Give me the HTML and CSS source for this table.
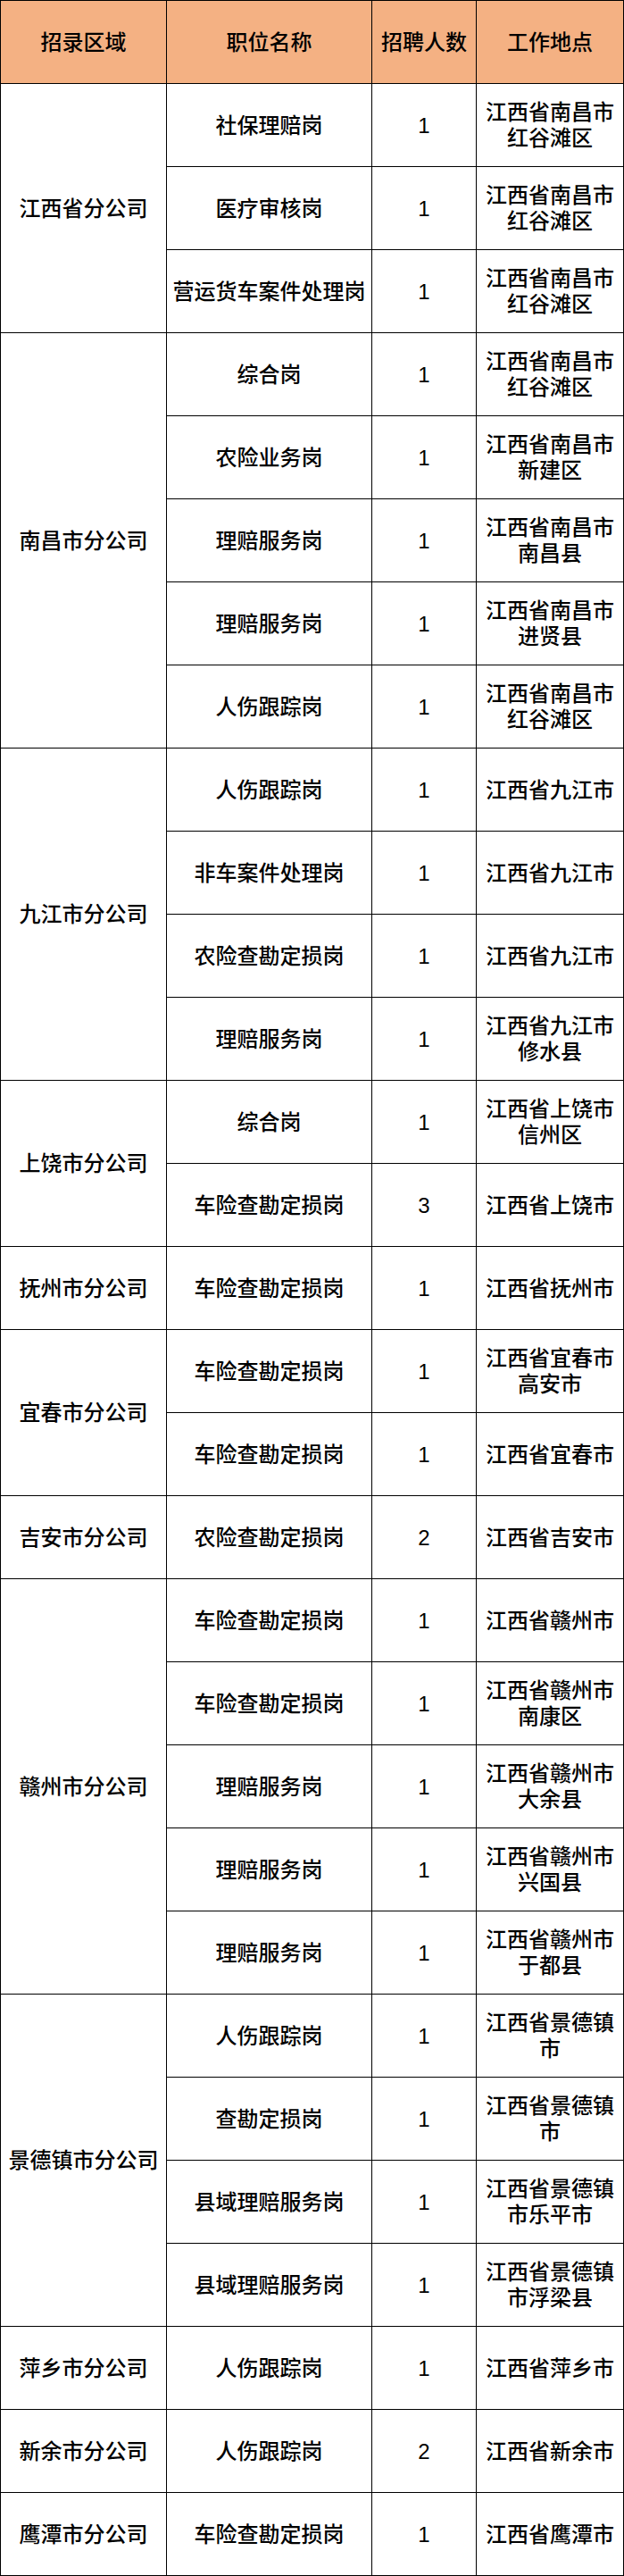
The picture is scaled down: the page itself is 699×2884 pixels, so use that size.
FILE: index.html
```html
<!DOCTYPE html>
<html lang="zh-CN">
<head>
<meta charset="utf-8">
<title>招聘岗位表</title>
<link rel="stylesheet" href="styles.css">
</head>
<body>
<table class="jobs">
  <colgroup>
    <col class="c-region">
    <col class="c-post">
    <col class="c-num">
    <col class="c-place">
  </colgroup>
  <thead>
    <tr><th>招录区域</th><th>职位名称</th><th>招聘人数</th><th>工作地点</th></tr>
  </thead>
  <tbody>
    <tr><td rowspan="3">江西省分公司</td><td>社保理赔岗</td><td>1</td><td>江西省南昌市<br>红谷滩区</td></tr>
    <tr><td>医疗审核岗</td><td>1</td><td>江西省南昌市<br>红谷滩区</td></tr>
    <tr><td>营运货车案件处理岗</td><td>1</td><td>江西省南昌市<br>红谷滩区</td></tr>

    <tr><td rowspan="5">南昌市分公司</td><td>综合岗</td><td>1</td><td>江西省南昌市<br>红谷滩区</td></tr>
    <tr><td>农险业务岗</td><td>1</td><td>江西省南昌市<br>新建区</td></tr>
    <tr><td>理赔服务岗</td><td>1</td><td>江西省南昌市<br>南昌县</td></tr>
    <tr><td>理赔服务岗</td><td>1</td><td>江西省南昌市<br>进贤县</td></tr>
    <tr><td>人伤跟踪岗</td><td>1</td><td>江西省南昌市<br>红谷滩区</td></tr>

    <tr><td rowspan="4">九江市分公司</td><td>人伤跟踪岗</td><td>1</td><td>江西省九江市</td></tr>
    <tr><td>非车案件处理岗</td><td>1</td><td>江西省九江市</td></tr>
    <tr><td>农险查勘定损岗</td><td>1</td><td>江西省九江市</td></tr>
    <tr><td>理赔服务岗</td><td>1</td><td>江西省九江市<br>修水县</td></tr>

    <tr><td rowspan="2">上饶市分公司</td><td>综合岗</td><td>1</td><td>江西省上饶市<br>信州区</td></tr>
    <tr><td>车险查勘定损岗</td><td>3</td><td>江西省上饶市</td></tr>

    <tr><td>抚州市分公司</td><td>车险查勘定损岗</td><td>1</td><td>江西省抚州市</td></tr>

    <tr><td rowspan="2">宜春市分公司</td><td>车险查勘定损岗</td><td>1</td><td>江西省宜春市<br>高安市</td></tr>
    <tr><td>车险查勘定损岗</td><td>1</td><td>江西省宜春市</td></tr>

    <tr><td>吉安市分公司</td><td>农险查勘定损岗</td><td>2</td><td>江西省吉安市</td></tr>

    <tr><td rowspan="5">赣州市分公司</td><td>车险查勘定损岗</td><td>1</td><td>江西省赣州市</td></tr>
    <tr><td>车险查勘定损岗</td><td>1</td><td>江西省赣州市<br>南康区</td></tr>
    <tr><td>理赔服务岗</td><td>1</td><td>江西省赣州市<br>大余县</td></tr>
    <tr><td>理赔服务岗</td><td>1</td><td>江西省赣州市<br>兴国县</td></tr>
    <tr><td>理赔服务岗</td><td>1</td><td>江西省赣州市<br>于都县</td></tr>

    <tr><td rowspan="4">景德镇市分公司</td><td>人伤跟踪岗</td><td>1</td><td>江西省景德镇<br>市</td></tr>
    <tr><td>查勘定损岗</td><td>1</td><td>江西省景德镇<br>市</td></tr>
    <tr><td>县域理赔服务岗</td><td>1</td><td>江西省景德镇<br>市乐平市</td></tr>
    <tr><td>县域理赔服务岗</td><td>1</td><td>江西省景德镇<br>市浮梁县</td></tr>

    <tr><td>萍乡市分公司</td><td>人伤跟踪岗</td><td>1</td><td>江西省萍乡市</td></tr>
    <tr><td>新余市分公司</td><td>人伤跟踪岗</td><td>2</td><td>江西省新余市</td></tr>
    <tr><td>鹰潭市分公司</td><td>车险查勘定损岗</td><td>1</td><td>江西省鹰潭市</td></tr>
  </tbody>
</table>
</body>
</html>
```

FILE: styles.css
```css
html, body {
  margin: 0;
  padding: 0;
  background: #ffffff;
}

.jobs {
  width: 699px;
  border-collapse: collapse;
  table-layout: fixed;
  font-family: "Liberation Sans", "Noto Sans CJK SC", sans-serif;
  font-size: 24px;
  line-height: 29px;
  color: #000000;
}

.c-region { width: 186px; }
.c-post { width: 230px; }
.c-num { width: 117px; }
.c-place { width: 165px; }

.jobs tr {
  height: 93px;
}

.jobs th,
.jobs td {
  border: 1px solid #000000;
  padding: 0;
  text-align: center;
  vertical-align: middle;
  font-weight: 500;
  white-space: nowrap;
}

.jobs th {
  background: #f4b183;
}
```
